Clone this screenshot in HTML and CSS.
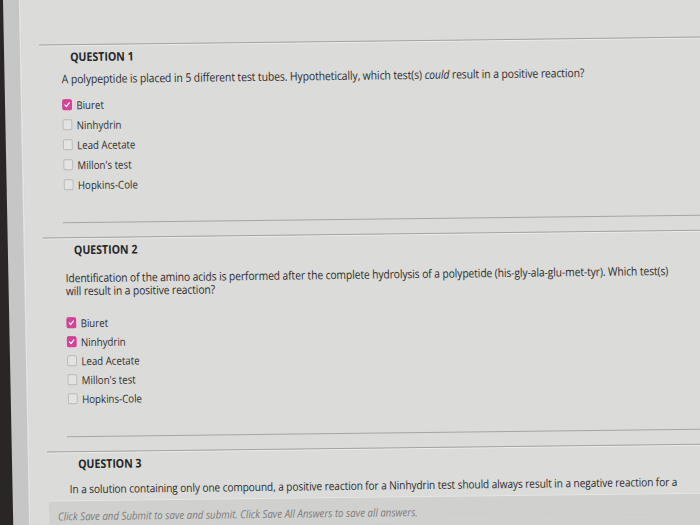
FILE: index.html
```html
<!DOCTYPE html>
<html lang="en">
<head>
<meta charset="utf-8">
<title>Questions</title>
<link rel="stylesheet" href="styles.css">
</head>
<body>
<div class="screen">
  <aside class="rail"></aside>
  <main class="main">
    <section class="question">
      <h2 class="q-title">QUESTION 1</h2>
      <div class="q-body">
        <p class="q-text q-text--tight">A polypeptide is placed in 5 different test tubes. Hypothetically, which test(s) <em>could</em> result in a positive reaction?</p>
        <ul class="options options--tight">
          <li class="option"><span class="box box--on"><svg viewBox="0 0 11 11"><path d="M2.6 5.7 L4.6 7.7 L8.5 3.2"/></svg></span>Biuret</li>
          <li class="option"><span class="box"></span>Ninhydrin</li>
          <li class="option"><span class="box"></span>Lead Acetate</li>
          <li class="option"><span class="box"></span>Millon's test</li>
          <li class="option"><span class="box"></span>Hopkins-Cole</li>
        </ul>
      </div>
    </section>
    <section class="question">
      <h2 class="q-title">QUESTION 2</h2>
      <div class="q-body">
        <p class="q-text q-text--narrow">Identification of the amino acids is performed after the complete hydrolysis of a polypetide (his-gly-ala-glu-met-tyr). Which test(s) will result in a positive reaction?</p>
        <ul class="options options--loose">
          <li class="option option--short"><span class="box box--on"><svg viewBox="0 0 11 11"><path d="M2.6 5.7 L4.6 7.7 L8.5 3.2"/></svg></span>Biuret</li>
          <li class="option option--short"><span class="box box--on"><svg viewBox="0 0 11 11"><path d="M2.6 5.7 L4.6 7.7 L8.5 3.2"/></svg></span>Ninhydrin</li>
          <li class="option option--short"><span class="box"></span>Lead Acetate</li>
          <li class="option option--short"><span class="box"></span>Millon's test</li>
          <li class="option option--short"><span class="box"></span>Hopkins-Cole</li>
        </ul>
      </div>
    </section>
    <section class="question question--last">
      <h2 class="q-title">QUESTION 3</h2>
      <p class="q-text q-text--last">In a solution containing only one compound, a positive reaction for a Ninhydrin test should always result in a negative reaction for a</p>
    </section>
    <footer class="savebar">
      <p class="savebar-text">Click Save and Submit to save and submit. Click Save All Answers to save all answers.</p>
    </footer>
  </main>
</div>
</body>
</html>
```

FILE: styles.css
```css
html, body {
  margin: 0;
  padding: 0;
}

body {
  background: linear-gradient(to right, #2b2626 0, #2b2626 16px, #d0d0ce 16px);
  height: 525px;
  overflow: hidden;
  font-family: "Open Sans", "Noto Sans", sans-serif;
  color: #2c2c2c;
}

.screen {
  display: flex;
  width: 792px;
  height: 525px;
  margin-left: 3px;
  transform-origin: 0 0;
  transform: matrix(0.88, -0.0106, 0.0195, 1, 0, 0);
}

.rail {
  width: 18px;
  flex: none;
  background: #c6c6c6;
  border-right: 2px solid #e3e3e3;
}

.main {
  flex: 1;
  min-width: 0;
  background: #dbdbd9;
  padding: 45px 0 0 20px;
  display: flex;
  flex-direction: column;
}

.question {
  border-top: 1px solid #a3a3a3;
  box-shadow: inset 0 1px 0 #ececea;
  padding-bottom: 14px;
}

.question--last {
  padding-bottom: 0;
}

.q-title {
  margin: 4px 0 0 35px;
  font-size: 12px;
  line-height: 16px;
  font-weight: 700;
  color: #262626;
}

.q-body {
  margin-left: 23px;
  padding-left: 2px;
  border-bottom: 1px solid #a6a6a6;
  padding-bottom: 28px;
}

.q-text {
  margin: 13px 0 0;
  font-size: 11.8px;
  line-height: 13px;
  letter-spacing: -0.1px;
}

.q-text--tight {
  margin-top: 7px;
}

.q-text--last {
  margin: 10px 0 0 25px;
  font-size: 11.5px;
  line-height: 14px;
}

.q-text--narrow {
  max-width: 702px;
  font-size: 11.7px;
}

.options {
  list-style: none;
  margin: 0;
  padding: 0;
}

.options--tight {
  margin-top: 9px;
}

.options--loose {
  margin-top: 16px;
}

.option {
  display: flex;
  align-items: center;
  gap: 5px;
  height: 20px;
  font-size: 11px;
  color: #2e2e2e;
}

.option--short {
  height: 19px;
}

.box {
  width: 11px;
  height: 11px;
  box-sizing: border-box;
  border: 1px solid #b8b8b8;
  border-radius: 2px;
  background: #e3e3e1;
  flex: none;
  display: flex;
}

.box--on {
  border-color: #d13a90;
  background: #d8409a;
}

.box svg {
  width: 9px;
  height: 9px;
}

.box svg path {
  fill: none;
  stroke: #ffffff;
  stroke-width: 1.7;
  stroke-linecap: round;
  stroke-linejoin: round;
}

.savebar {
  margin-top: 4px;
  margin-left: 1px;
  flex: 1;
  background: #d0d0ce;
  border-top: 1px solid #e6e6e4;
  padding: 9px 0 0 10px;
}

.savebar-text {
  margin: 0;
  font-size: 11px;
  font-style: italic;
  color: #7c7c7c;
  line-height: 12px;
}
```
